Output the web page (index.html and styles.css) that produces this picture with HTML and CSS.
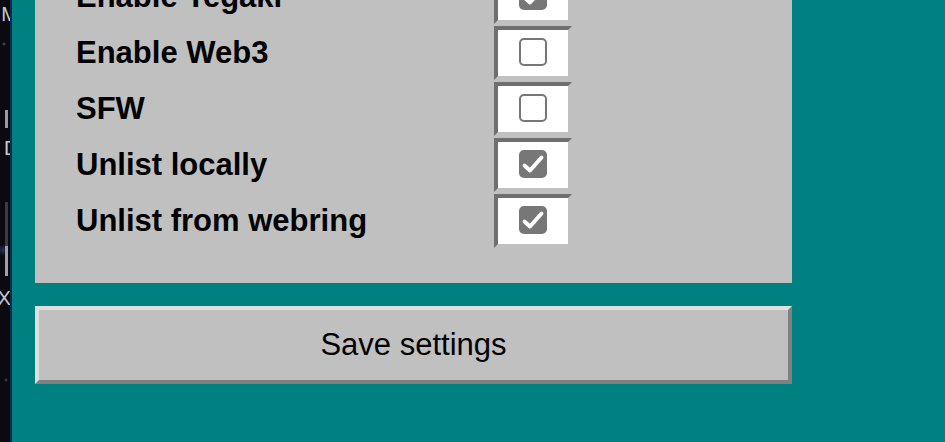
FILE: index.html
```
<!DOCTYPE html>
<html lang="en">
<head>
    <meta charset="UTF-8">
    <meta name="viewport" content="width=device-width, initial-scale=1.0">
    <title>Settings</title>
    <link rel="stylesheet" href="styles.css">
</head>
<body>
<div class="desktop">
    <span class="frag frag-m">M</span>
    <span class="bar bar-a"></span>
    <span class="frag frag-di">DI</span>
    <span class="bar bar-b"></span>
    <span class="frag frag-xe">Xe</span>
</div>

<div class="main">
    <form class="panel">
        <div class="row">
            <label class="label" for="tegaki">Enable Tegaki</label>
            <div class="cell">
                <svg class="box checked" id="tegaki" viewBox="0 0 28 28" width="28" height="28"><rect x="1" y="1" width="26" height="26" rx="4"/><polyline points="5.5,15.5 11,20.5 22.5,7.5"/></svg>
            </div>
        </div>

        <div class="row">
            <label class="label">Enable Web3</label>
            <div class="cell">
                <svg class="box" viewBox="0 0 28 28" width="28" height="28"><rect x="1" y="1" width="26" height="26" rx="4"/></svg>
            </div>
        </div>

        <div class="row">
            <label class="label">SFW</label>
            <div class="cell">
                <svg class="box" viewBox="0 0 28 28" width="28" height="28"><rect x="1" y="1" width="26" height="26" rx="4"/></svg>
            </div>
        </div>

        <div class="row">
            <label class="label">Unlist locally</label>
            <div class="cell">
                <svg class="box checked" viewBox="0 0 28 28" width="28" height="28"><rect x="1" y="1" width="26" height="26" rx="4"/><polyline points="5.5,15.5 11,20.5 22.5,7.5"/></svg>
            </div>
        </div>

        <div class="row">
            <label class="label">Unlist from webring</label>
            <div class="cell">
                <svg class="box checked" viewBox="0 0 28 28" width="28" height="28"><rect x="1" y="1" width="26" height="26" rx="4"/><polyline points="5.5,15.5 11,20.5 22.5,7.5"/></svg>
            </div>
        </div>
    </form>

    <button class="save" type="button">Save settings</button>
</div>
</body>
</html>
```

FILE: styles.css
```
:root {
    --teal: #008080;
    --silver: #c0c0c0;
    --shade: #808080;
    --light: #dfdfdf;
    --inset: #6f6f6f;
}

* {
    margin: 0;
    padding: 0;
    box-sizing: border-box;
}

body {
    font-family: 'Liberation Sans', Arial, sans-serif;
    background: var(--teal);
    color: #000;
    height: 442px;
    overflow: hidden;
    display: flex;
}

/* sliver of the window behind */
.desktop {
    width: 12px;
    flex-shrink: 0;
    background: radial-gradient(circle at 4px 44px, #5a6070 0, transparent 2px),
                radial-gradient(circle at 6px 380px, #4a5060 0, transparent 2px),
                radial-gradient(circle at 3px 250px, #2a3050 0, transparent 6px),
                #0a0a10;
    border-right: 2px solid #0c2c54;
    display: flex;
    flex-direction: column;
    align-items: flex-end;
    overflow: hidden;
    color: #c8c8d0;
    font-size: 20px;
}

.frag {
    line-height: 1;
    margin-right: -8px;
}

.frag-m { margin-top: 4px; }
.frag-di { margin-top: 10px; margin-right: -14px; }
.frag-xe { margin-top: 12px; margin-right: -12px; }

.bar {
    width: 3px;
    margin-right: 2px;
    background: #9a9aa0;
}

.bar-a { height: 18px; margin-top: 86px; }
.bar-b { height: 74px; margin-top: 44px; background: linear-gradient(#3a3a40 60%, #a0a0a8 60%); }

.main {
    flex: 1;
    padding-left: 23px;
}

.panel {
    width: 757px;
    background: var(--silver);
    margin-top: -60px;
    padding: 30px 0 35px 41px;
    display: flex;
    flex-direction: column;
    gap: 2px;
}

.row {
    display: grid;
    grid-template-columns: 418px 78px;
    align-items: center;
    height: 54px;
}

.label {
    font-size: 31px;
    font-weight: 700;
}

.cell {
    height: 54px;
    background: #fff;
    border: 4px solid;
    border-color: var(--inset) var(--silver) var(--silver) var(--inset);
    display: flex;
    align-items: center;
    justify-content: center;
}

.box {
    display: block;
    margin-top: -3px;
}

.box rect {
    fill: none;
    stroke: #777;
    stroke-width: 2;
}

.box.checked rect {
    fill: #777;
}

.box polyline {
    fill: none;
    stroke: #fff;
    stroke-width: 4;
    stroke-linecap: round;
    stroke-linejoin: round;
}

.save {
    display: block;
    width: 757px;
    height: 78px;
    margin-top: 23px;
    background: var(--silver);
    border: 4px solid;
    border-color: var(--light) var(--shade) var(--shade) var(--light);
    font-family: inherit;
    font-size: 31px;
    color: #000;
}
```
